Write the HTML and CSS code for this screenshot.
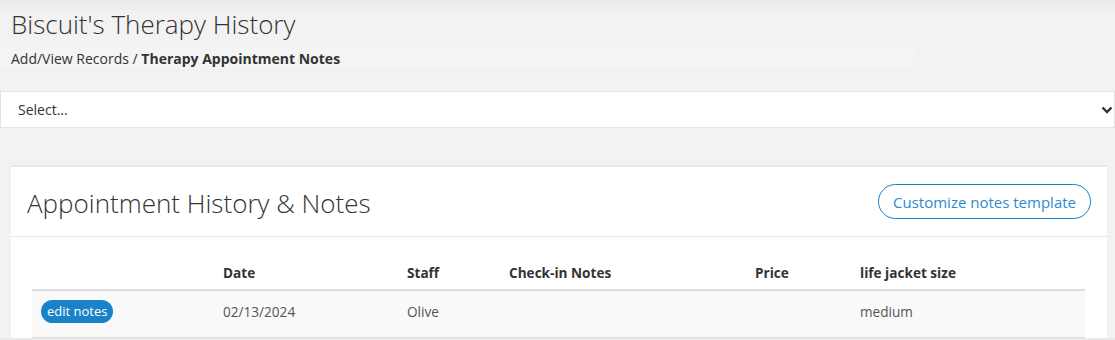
FILE: index.html
```html
<!doctype html>
<html>
	<head>
		<meta charset="utf-8"/>
		<meta name="viewport" content="width=device-width, initial-scale=1" />
		<title>Biscuit's Therapy History</title>
		<link rel="stylesheet" href="styles.css">
	</head>
	<body>
		<div class="page-head">
			<h1 class="page-title">Biscuit's Therapy History</h1>
			<div class="crumbs">Add/View Records / <b>Therapy Appointment Notes</b></div>
		</div>

		<div class="select-wrap">
			<select class="pet-select">
				<option>Select...</option>
			</select>
			<svg class="chevron" width="12" height="8" viewBox="0 0 12 8">
				<path d="M1.5 1.5 L6 6 L10.5 1.5" fill="none" stroke="#333" stroke-width="2.4"/>
			</svg>
		</div>

		<div class="card">
			<div class="card-head">
				<h2 class="card-title">Appointment History &amp; Notes</h2>
				<button class="outline-btn">Customize notes template</button>
			</div>
			<div class="card-body">
				<table class="notes">
					<thead>
						<tr>
							<th class="c-edit"></th>
							<th class="c-date">Date</th>
							<th class="c-staff">Staff</th>
							<th class="c-check">Check-in Notes</th>
							<th class="c-price">Price</th>
							<th>life jacket size</th>
						</tr>
					</thead>
					<tbody>
						<tr>
							<td><span class="badge">edit notes</span></td>
							<td>02/13/2024</td>
							<td>Olive</td>
							<td></td>
							<td></td>
							<td>medium</td>
						</tr>
					</tbody>
				</table>
			</div>
		</div>
	</body>
</html>
```

FILE: styles.css
```css
body {
	margin: 0;
	background: linear-gradient(#e9e9e9, #f2f2f2 12px) #f2f2f2;
	font-family: "Open Sans", sans-serif;
	color: #333;
}

.page-head {
	padding: 6px 0 0 11px;
	height: 85px;
	box-sizing: border-box;
}

.page-title {
	margin: 0;
	font-size: 26px;
	font-weight: 300;
	line-height: 36px;
	color: #333;
}

.crumbs {
	margin: 6px 0 0 -11px;
	padding: 1px 0 0 11px;
	width: 907px;
	height: 20px;
	font-size: 14px;
	line-height: 20px;
	background: #f4f4f4;
	border-radius: 0 4px 4px 0;
}

.crumbs b {
	font-weight: 700;
}

.select-wrap {
	position: relative;
	margin-top: 6px;
}

.pet-select {
	display: block;
	width: 100%;
	height: 37px;
	padding: 0 17px;
	appearance: none;
	-webkit-appearance: none;
	background: #fff;
	border: 1px solid #e3e3e3;
	border-radius: 0;
	font-family: "Open Sans", sans-serif;
	font-size: 14px;
	color: #333;
}

.chevron {
	position: absolute;
	right: 2px;
	top: 15px;
}

.card {
	margin: 37px 8px 0 11px;
	background: #fff;
	border-top: 2px solid #e6e9ed;
}

.card-head {
	display: flex;
	justify-content: space-between;
	align-items: center;
	height: 69px;
	padding: 0 16px 0 16px;
	border-bottom: 1px solid #e5e5e5;
}

.card-title {
	margin: 0;
	padding-top: 3px;
	font-size: 26px;
	font-weight: 300;
	color: #333;
}

.outline-btn {
	height: 35px;
	padding: 0 14px;
	background: #fff;
	border: 1px solid #1a82c8;
	border-radius: 18px;
	color: #2b8ad0;
	font-family: "Open Sans", sans-serif;
	font-size: 15px;
	cursor: pointer;
}

.card-body {
	padding: 18px 21px 0 21px;
}

.notes {
	width: 1053px;
	border-collapse: collapse;
	font-size: 13.6px;
	color: #555;
}

.notes th {
	text-align: left;
	font-weight: 700;
	color: #333;
	padding: 6px 9px 6px 9px;
	height: 22px;
	border-bottom: 2px solid #ddd;
}

.notes td {
	padding: 0 9px 5px 9px;
	height: 41px;
	background: #f9f9f9;
	border-bottom: 1px solid #ddd;
}

.c-edit { width: 164px; }
.c-date { width: 166px; }
.c-staff { width: 84px; }
.c-check { width: 228px; }
.c-price { width: 87px; }

.badge {
	display: inline-block;
	padding: 1px 6px 2px 6px;
	background: #1a82c8;
	color: #fff;
	border-radius: 12px;
	font-size: 13px;
	line-height: 20px;
}
```
